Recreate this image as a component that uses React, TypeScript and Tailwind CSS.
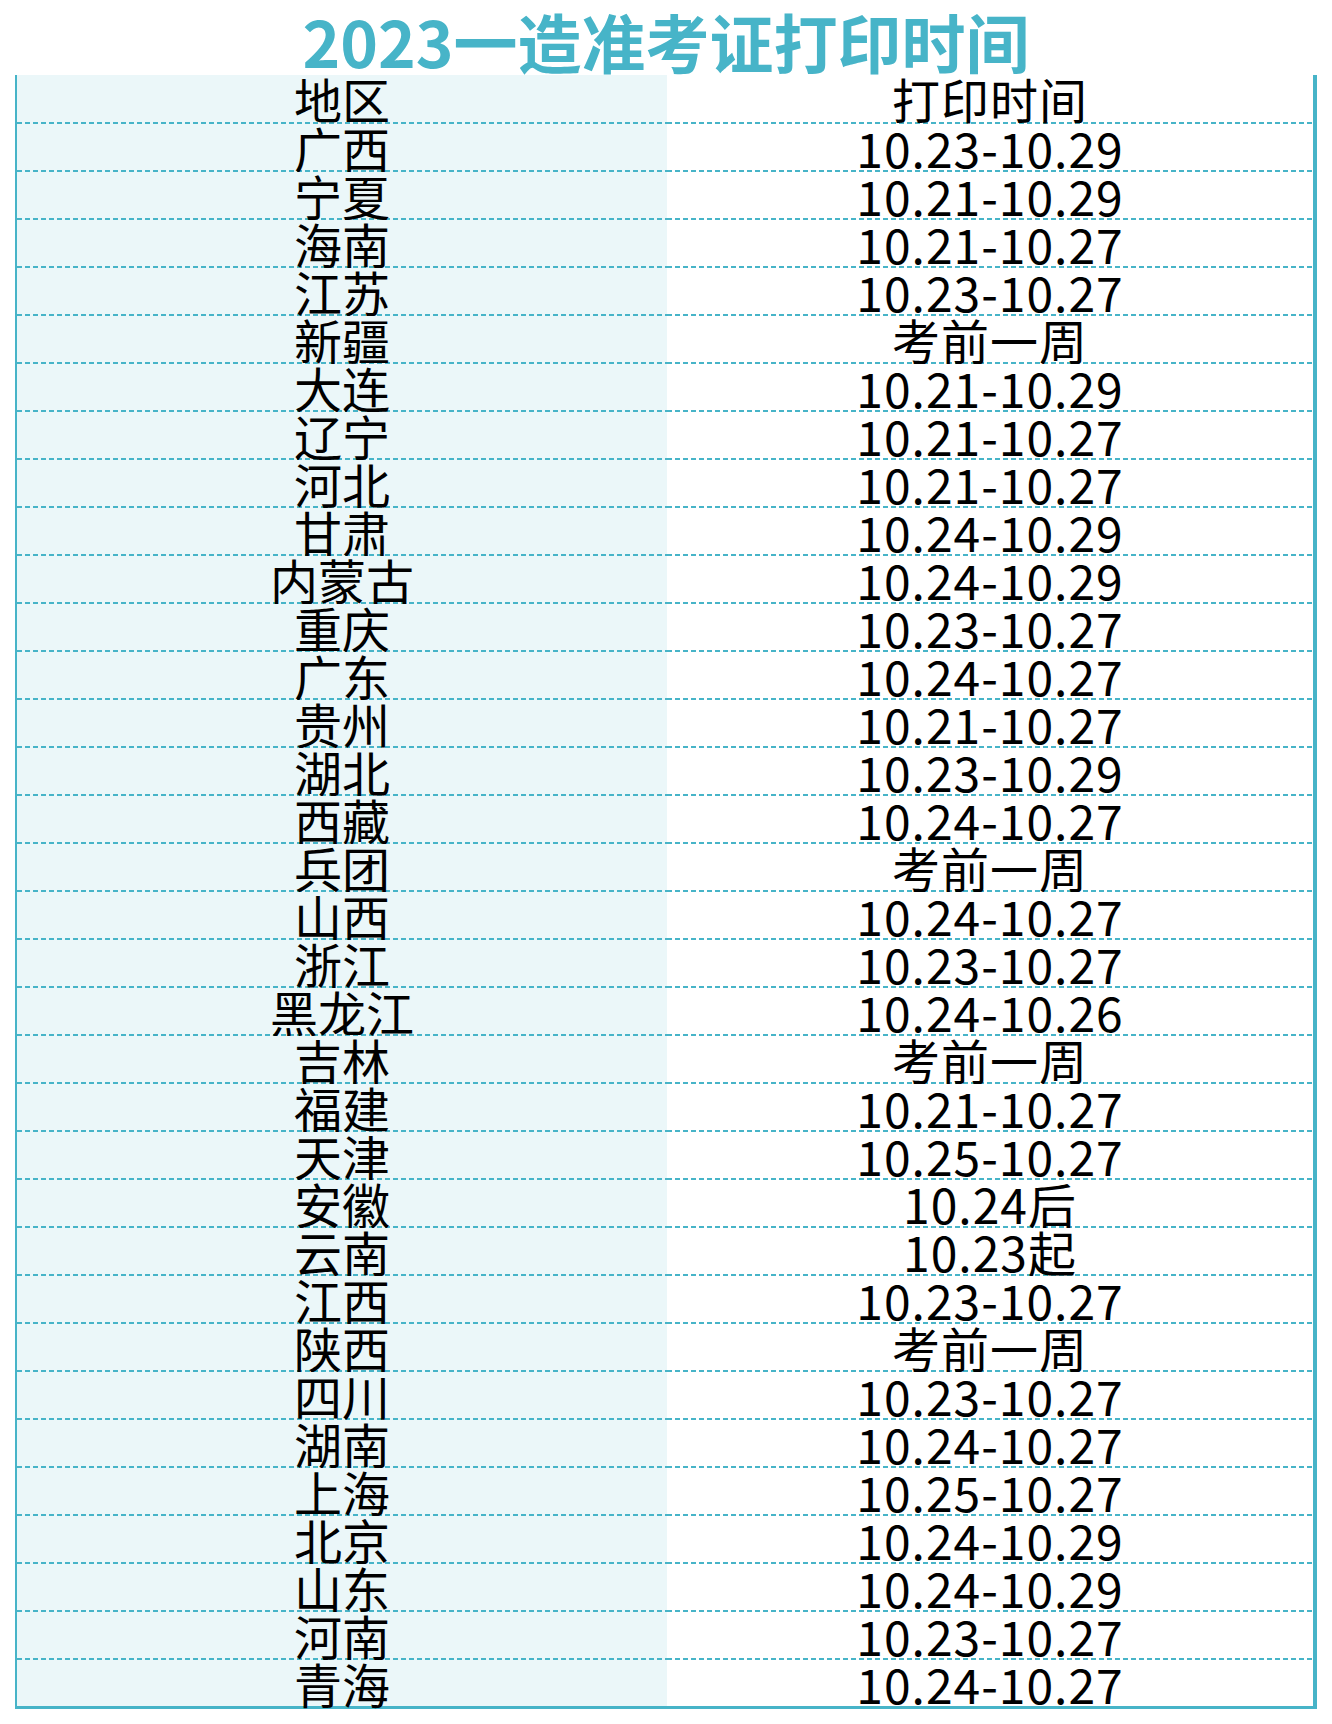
const rows: [string, string][] = [
  ["广西", "10.23-10.29"],
  ["宁夏", "10.21-10.29"],
  ["海南", "10.21-10.27"],
  ["江苏", "10.23-10.27"],
  ["新疆", "考前一周"],
  ["大连", "10.21-10.29"],
  ["辽宁", "10.21-10.27"],
  ["河北", "10.21-10.27"],
  ["甘肃", "10.24-10.29"],
  ["内蒙古", "10.24-10.29"],
  ["重庆", "10.23-10.27"],
  ["广东", "10.24-10.27"],
  ["贵州", "10.21-10.27"],
  ["湖北", "10.23-10.29"],
  ["西藏", "10.24-10.27"],
  ["兵团", "考前一周"],
  ["山西", "10.24-10.27"],
  ["浙江", "10.23-10.27"],
  ["黑龙江", "10.24-10.26"],
  ["吉林", "考前一周"],
  ["福建", "10.21-10.27"],
  ["天津", "10.25-10.27"],
  ["安徽", "10.24后"],
  ["云南", "10.23起"],
  ["江西", "10.23-10.27"],
  ["陕西", "考前一周"],
  ["四川", "10.23-10.27"],
  ["湖南", "10.24-10.27"],
  ["上海", "10.25-10.27"],
  ["北京", "10.24-10.29"],
  ["山东", "10.24-10.29"],
  ["河南", "10.23-10.27"],
  ["青海", "10.24-10.27"],
];

const dash =
  "bg-[image:repeating-linear-gradient(90deg,#47b4c8_0px,#47b4c8_5px,transparent_5px,transparent_8px)] bg-[length:100%_2px] bg-bottom bg-no-repeat";

function Row({ area, time, first, last }: { area: string; time: string; first?: boolean; last?: boolean }) {
  const h = first ? "h-[49px]" : last ? "h-[45px]" : "h-[48px]";
  const line = last ? "" : dash;
  return (
    <div className={`grid grid-cols-[650px_1fr] ${h}`}>
      <div className={`bg-[#ebf7f9] ${line} text-center leading-[46px] text-[48px]`}>{area}</div>
      <div className={`bg-white ${line} text-center leading-[46px] text-[48px] tracking-[1px]`}>{time}</div>
    </div>
  );
}

export default function App() {
  return (
    <div className="w-[1332px] h-[1724px] bg-white text-black font-['Noto_Sans_CJK_SC','Noto_Sans',sans-serif]">
      <div className="h-[75px] pt-2 pl-[15px] w-[1317px] text-center">
        <h1 className="text-[64px] leading-[64px] font-bold text-[#47b4c8]">2023一造准考证打印时间</h1>
      </div>
      <div className="ml-[15px] w-[1302px] border-l-2 border-r-4 border-b-4 border-[#47b4c8]">
        <Row area="地区" time="打印时间" first />
        {rows.map(([a, t], i) => (
          <Row key={a} area={a} time={t} last={i === rows.length - 1} />
        ))}
      </div>
    </div>
  );
}
